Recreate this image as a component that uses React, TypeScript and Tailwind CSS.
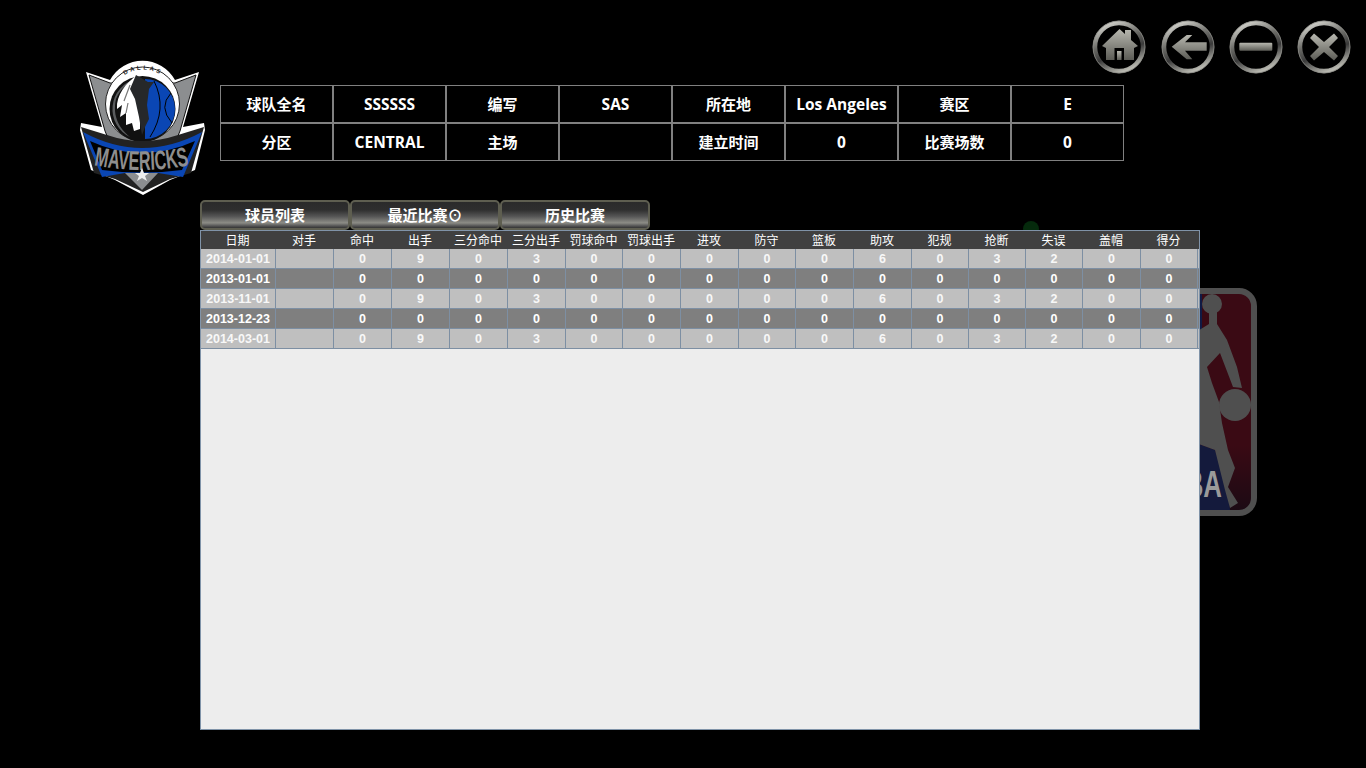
const infoRows = [
  ["球队全名", "SSSSSS", "编写", "SAS", "所在地", "Los Angeles", "赛区", "E"],
  ["分区", "CENTRAL", "主场", "", "建立时间", "0", "比赛场数", "0"],
]

const columns = [
  { title: "日期", width: 75 },
  { title: "对手", width: 58 },
  { title: "命中", width: 58 },
  { title: "出手", width: 58 },
  { title: "三分命中", width: 58 },
  { title: "三分出手", width: 58 },
  { title: "罚球命中", width: 57 },
  { title: "罚球出手", width: 58 },
  { title: "进攻", width: 58 },
  { title: "防守", width: 57 },
  { title: "篮板", width: 58 },
  { title: "助攻", width: 58 },
  { title: "犯规", width: 57 },
  { title: "抢断", width: 57 },
  { title: "失误", width: 57 },
  { title: "盖帽", width: 58 },
  { title: "得分", width: 57 },
]

const games = [
  ["2014-01-01", "", "0", "9", "0", "3", "0", "0", "0", "0", "0", "6", "0", "3", "2", "0", "0"],
  ["2013-01-01", "", "0", "0", "0", "0", "0", "0", "0", "0", "0", "0", "0", "0", "0", "0", "0"],
  ["2013-11-01", "", "0", "9", "0", "3", "0", "0", "0", "0", "0", "6", "0", "3", "2", "0", "0"],
  ["2013-12-23", "", "0", "0", "0", "0", "0", "0", "0", "0", "0", "0", "0", "0", "0", "0", "0"],
  ["2014-03-01", "", "0", "9", "0", "3", "0", "0", "0", "0", "0", "6", "0", "3", "2", "0", "0"],
]

function RoundButton({ id, className, children }: { id: string; className?: string; children: React.ReactNode }) {
  return (
    <svg className={className} width="54" height="54" viewBox="0 0 54 54">
      <defs>
        <linearGradient id={`ring-${id}`} x1="0.2" y1="0" x2="0.6" y2="1">
          <stop offset="0" stopColor="#d6d6d0" />
          <stop offset="0.4" stopColor="#6a6a66" />
          <stop offset="0.65" stopColor="#3a3a3a" />
          <stop offset="1" stopColor="#b8b8b0" />
        </linearGradient>
        <linearGradient id={`icon-${id}`} x1="0" y1="0" x2="0" y2="1">
          <stop offset="0" stopColor="#b8b8b0" />
          <stop offset="1" stopColor="#5c5c56" />
        </linearGradient>
      </defs>
      <circle cx="27" cy="27" r="24" fill="none" stroke={`url(#ring-${id})`} strokeWidth="4.5" />
      <circle cx="27" cy="27" r="26" fill="none" stroke="#8c8c86" strokeWidth="0.8" />
      <g fill={`url(#icon-${id})`}>{children}</g>
    </svg>
  )
}

function MavsLogo() {
  return (
    <svg className="block" width="145" height="145" viewBox="0 0 145 145">
      <defs>
        <path id="dallas-arc" d="M46 28 A34 34 0 0 1 100 28" />
        <path id="mavs-arc" d="M23 110 Q72 120 120 110" />
      </defs>
      {/* white outline */}
      <path d="M16 17 L40 25 A37 37 0 0 1 105 25 L129 17 L113 72 L134 68 L135 75 L125 115 L100 125 L73 140 L45 125 L21 115 L10 75 L11 68 L32 72 Z" fill="#fff" />
      {/* grey wings */}
      <path d="M19 20 L40 28 L105 28 L126 20 L110 76 L100 100 L73 128 L45 100 L35 76 Z" fill="#8c8e90" stroke="#111" strokeWidth="1" />
      <circle cx="72.5" cy="49" r="37" fill="#fff" stroke="#222" strokeWidth="1" />
      <circle cx="72.5" cy="54" r="33" fill="#111" />
      <path d="M75 24 A30 30 0 0 1 75 84 Z" fill="#0a46b4" />
      <path d="M84 26 Q98 54 80 82 M101 38 Q88 52 102 68" stroke="#000" strokeWidth="1" fill="none" />
      <path d="M66 24 A31 31 0 0 0 60 82 C50 74 42 62 46 44 C50 34 58 28 66 24 Z" fill="#5a5c5e" />
      {/* horse */}
      <path d="M67 20 C56 28 46 40 47 54 L52 50 L50 62 L56 58 L56 70 L62 68 L64 76 L70 74 L70 56 L64 36 Z" fill="#fff" />
      <path d="M66 20 L78 27 L84 27 L79 34 L77 50 L79 64 L75 72 L72 80 L69 62 L65 44 L60 34 Z" fill="#26282a" />
      <path d="M60 30 L54 46 M58 48 L56 58" stroke="#777" strokeWidth="1.2" fill="none" />
      <text fontFamily="Liberation Sans, sans-serif" fontSize="6" fontWeight="700" fill="#222">
        <textPath href="#dallas-arc" startOffset="50%" textAnchor="middle" letterSpacing="2.4">DALLAS</textPath>
      </text>
      {/* banner */}
      <path d="M11 72 L24 118 L45 124 L73 137 L100 124 L121 118 L134 72 L108 80 Q72 92 37 80 Z" fill="#222" />
      <path d="M13 77 Q72 109 132 77 L113 122 L88 118 L55 118 L32 122 Z" fill="#0a46b4" />
      <path d="M20 86 Q72 110 125 86 L112 115 Q72 120 32 115 Z" fill="#000" />
      <text fontFamily="Liberation Sans, sans-serif" fontSize="27" fontWeight="700" fill="#8e8e8e">
        <textPath href="#mavs-arc" startOffset="50%" textAnchor="middle" textLength="96" lengthAdjust="spacingAndGlyphs">MAVERICKS</textPath>
      </text>
      {/* lower point with the star */}
      <path d="M55 118 L88 118 L72 135 Z" fill="#8c8e90" />
      <path d="M72 113 L74 118 L79 118 L75 121 L77 126 L72 123 L67 126 L69 121 L65 118 L70 118 Z" fill="#eee" />
    </svg>
  )
}

function NbaLogo() {
  return (
    <svg className="absolute inset-0" width="145" height="216" viewBox="0 0 145 216">
      <path d="M90 0 H96 V38 H90 Z" fill="#101a44" />
      <path d="M90 149 L109 156 L122 193 L124 216 H90 Z" fill="#141a3c" />
      <circle cx="106" cy="10" r="10" fill="#4f4f4f" />
      <path d="M103 18 L111 18 L111 30 L121 46 L131 73 L136 94 L127 93 L114 59 L101 73 L106 89 L113 108 L116 129 L122 156 L129 174 L122 193 L132 209 L124 214 L119 196 L109 156 L90 149 V38 L103 30 Z" fill="#4f4f4f" />
      <circle cx="129" cy="111" r="16" fill="#4f4f4f" />
      <text x="60" y="203" fontFamily="Liberation Sans, sans-serif" fontSize="36" fontWeight="700" textLength="56" lengthAdjust="spacingAndGlyphs" fill="#9a9a9a">NBA</text>
    </svg>
  )
}

export default function App() {
  return (
    <div className="relative w-[1366px] h-[768px] overflow-hidden bg-black font-['Noto_Sans_CJK_SC',sans-serif]">
      {/* logos left behind the table, only their edges show */}
      <div className="absolute left-[1100px] top-[288px] w-[157px] h-[228px] rounded-[18px] border-[6px] border-[#4f4f4f] overflow-hidden bg-[linear-gradient(180deg,#3a0a14_0%,#3a0a14_70%,#1c0a14_100%)]">
        <NbaLogo />
      </div>
      <div className="absolute left-[1023px] top-[221px] size-[16px] rounded-full bg-[#052a0c]" />

      <div className="relative flex h-[200px]">
        <div className="w-[220px] shrink-0 pl-[70px] pt-[55px]">
          <MavsLogo />
        </div>
        <div className="flex flex-col">
          <div className="flex gap-[14px] pt-[20px] pl-[872px]">
            <RoundButton id="home" className="mr-px">
              <path d="M27.5 9 L33 14 V10 H39 V20 L46 26 L42 28 V40 H32 V28 H22.5 V40 H14 V28 L10 26 Z" />
              <rect x="25" y="31" width="4.5" height="9" />
            </RoundButton>
            <RoundButton id="back">
              <path d="M10.7 26.7 L25.7 15 H31.3 L24 22.3 H45.7 V30.7 H24 L31.3 39.3 H25.7 Z" />
            </RoundButton>
            <RoundButton id="minus">
              <rect x="10.3" y="22.7" width="33" height="8" rx="1" />
            </RoundButton>
            <RoundButton id="close">
              <path d="M17 13.5 L27 22 L37 13.5 L41 18 L32 27 L41 36 L37 40.5 L27 32 L17 40.5 L13 36 L22 27 L13 18 Z" />
            </RoundButton>
          </div>
          <table className="mt-[11px] w-[904px] table-fixed border-separate border-spacing-0">
            <tbody>
              {infoRows.map((row, i) => (
                <tr key={i} className="h-[38px]">
                  {row.map((text, j) => (
                    <td
                      key={j}
                      className={
                        j % 2 === 0
                          ? "border border-[#808080] pb-[2px] text-center text-[15px] font-bold leading-none text-white font-['Noto_Sans_CJK_SC',sans-serif]"
                          : "border border-[#808080] pt-[2px] text-center text-[15.5px] font-bold leading-none text-white font-['Open_Sans','Noto_Sans_CJK_SC',sans-serif]"
                      }>
                      {text}
                    </td>
                  ))}
                </tr>
              ))}
            </tbody>
          </table>
        </div>
      </div>

      <div className="relative pl-[200px]">
        <div className="flex h-[30px]">
          {["球员列表", "最近比赛⊙", "历史比赛"].map((tab) => (
            <div
              key={tab}
              className="w-[150px] rounded-[5px] border-2 border-[#5e5e50] bg-[linear-gradient(180deg,#2a2a2a_0%,#2e2e2e_30%,#555_55%,#8c8c86_80%,#555_92%,#333_100%)] text-center text-[15px] leading-[26px] font-bold text-white">
              {tab}
            </div>
          ))}
        </div>
        <div className="w-[1000px] h-[500px] border border-[#8093a8] bg-[#ededed]">
          <table className="w-[998px] table-fixed border-separate border-spacing-0">
            <colgroup>
              {columns.map((col) => (
                <col key={col.title} style={{ width: col.width }} />
              ))}
              <col className="w-px" />
            </colgroup>
            <thead>
              <tr className="h-[18px] bg-[#404040]">
                {columns.map((col) => (
                  <th key={col.title} className="p-0 pr-[2px] text-center text-[12px] leading-none font-normal text-white">
                    {col.title}
                  </th>
                ))}
                <th className="p-0" />
              </tr>
            </thead>
            <tbody>
              {games.map((game, i) => (
                <tr key={i} className={i % 2 === 0 ? "h-[20px] bg-[#bfbfbf]" : "h-[20px] bg-[#7f7f7f]"}>
                  {game.map((value, j) => (
                    <td
                      key={j}
                      className={
                        i % 2 === 0
                          ? "border-r border-b border-[#7d8fa3] p-0 pt-[2px] text-center text-[12.5px] leading-none font-bold text-[#f8f8f8] font-['Liberation_Sans',sans-serif]"
                          : "border-r border-b border-[#7d8fa3] p-0 pt-[2px] text-center text-[12.5px] leading-none font-bold text-white font-['Liberation_Sans',sans-serif]"
                      }>
                      {value}
                    </td>
                  ))}
                  <td className="border-b border-[#7d8fa3] p-0" />
                </tr>
              ))}
            </tbody>
          </table>
        </div>
      </div>
    </div>
  )
}
